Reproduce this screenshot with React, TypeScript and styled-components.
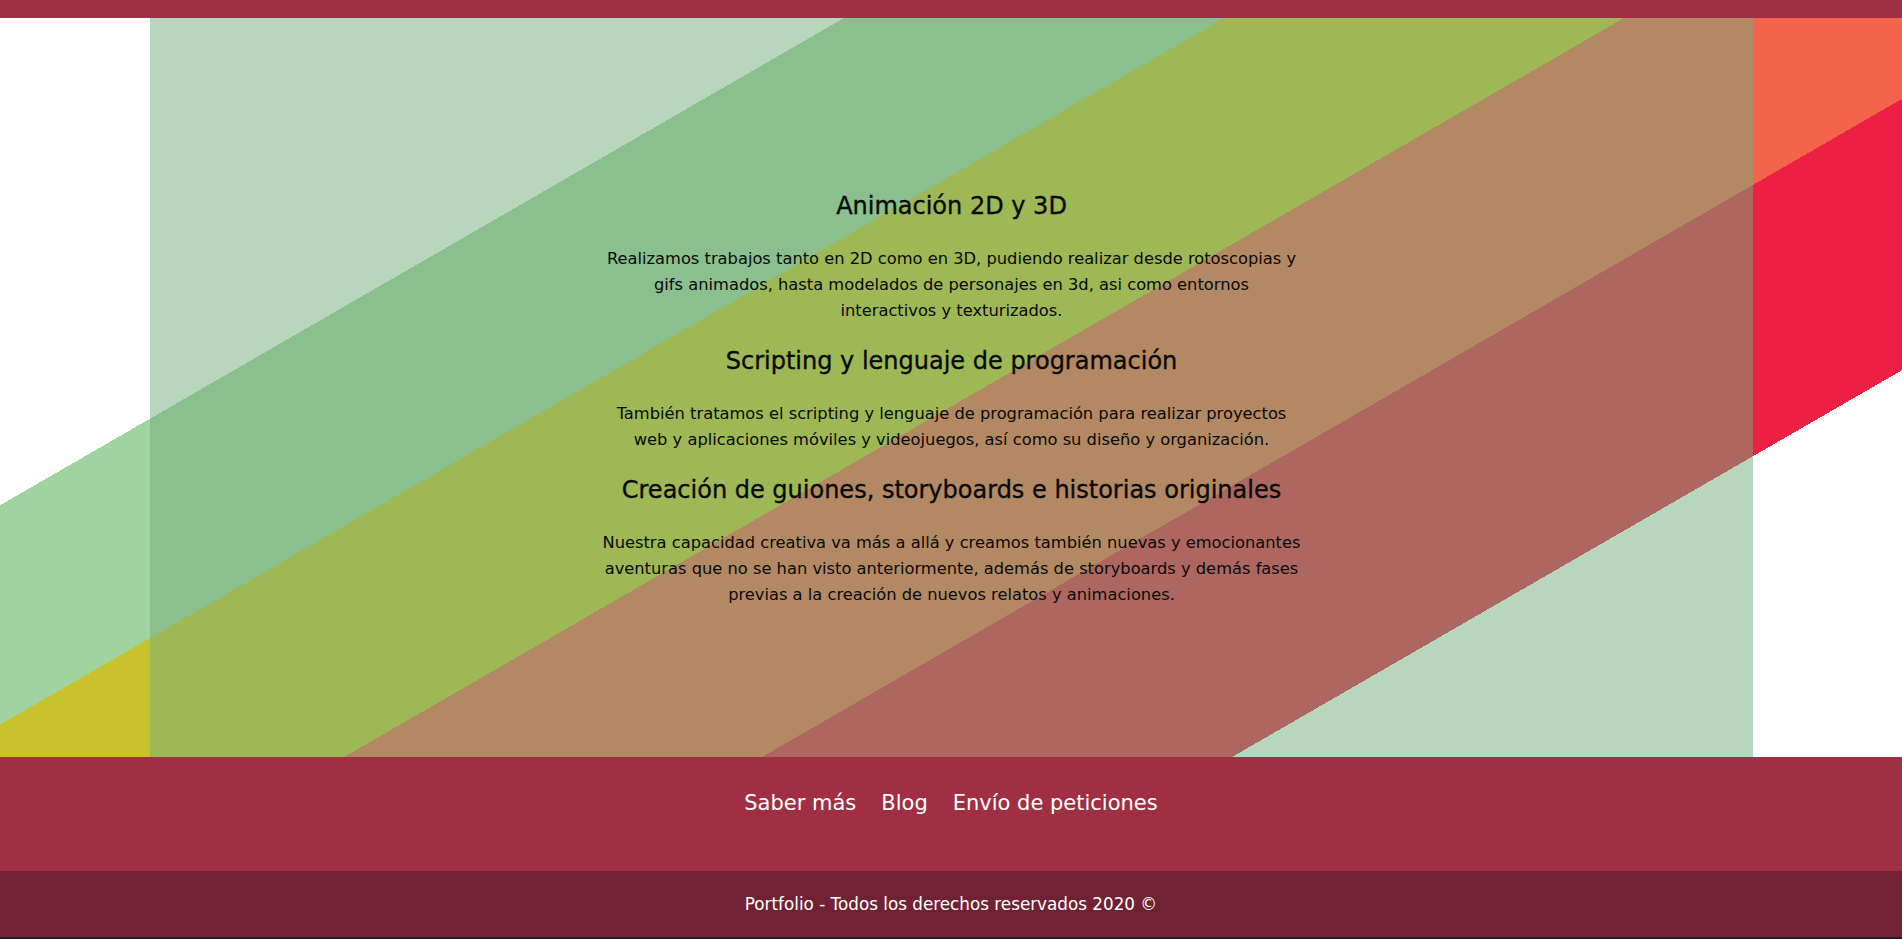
import React from "react";
import styled, { createGlobalStyle } from "styled-components";

const GlobalStyle = createGlobalStyle`
  html, body {
    margin: 0;
    padding: 0;
    background: #ffffff;
  }
  body {
    font-family: "DejaVu Sans", "Liberation Sans", sans-serif;
    overflow: hidden;
  }
  * { box-sizing: border-box; }
`;

const Page = styled.div`
  display: flex;
  flex-direction: column;
  width: 1902px;
  min-height: 939px;
`;

const TopBar = styled.header`
  height: 18px;
  background: #a02f43;
`;

const Hero = styled.section`
  height: 739px;
  display: flex;
  padding: 0 149px 0 150px;
  background: linear-gradient(
    150deg,
    #ffffff 422px,
    #a1d39f 422px 612px,
    #c8c22d 612px 812px,
    #f4644a 812px 1021px,
    #eb2043 1021px 1256px,
    #ffffff 1256px
  );
`;

const Panel = styled.div`
  flex: 1;
  display: flex;
  flex-direction: column;
  align-items: center;
  padding-top: 174px;
  background: rgba(113, 173, 125, 0.5);
`;

const Services = styled.div`
  width: 760px;
  display: flex;
  flex-direction: column;
  align-items: center;
  text-align: center;
  color: #0a0a0a;
`;

const ServiceTitle = styled.h2`
  margin: 0 0 25px;
  font-size: 24px;
  font-weight: normal;
  line-height: 29px;
  white-space: nowrap;
  -webkit-text-stroke: 0.35px currentColor;
`;

const ServiceText = styled.p`
  margin: 0 0 23px;
  font-size: 16.3px;
  line-height: 26px;
  white-space: pre-line;
`;

const NavFooter = styled.nav`
  height: 114px;
  background: #a02f43;
  display: flex;
  justify-content: center;
  align-items: flex-start;
  padding-top: 32px;
  gap: 25px;
`;

const NavLink = styled.a`
  color: #ffffff;
  text-decoration: none;
  font-size: 21px;
  line-height: 28px;
`;

const CopyFooter = styled.footer`
  height: 66px;
  background: #712232;
  display: flex;
  justify-content: center;
  align-items: center;
  color: #ffffff;
  font-size: 16.8px;
`;

const BottomStrip = styled.div`
  height: 2px;
  background: #1e1e1e;
`;

const services = [
  {
    title: "Animación 2D y 3D",
    lines: [
      "Realizamos trabajos tanto en 2D como en 3D, pudiendo realizar desde rotoscopias y",
      "gifs animados, hasta modelados de personajes en 3d, asi como entornos",
      "interactivos y texturizados.",
    ],
  },
  {
    title: "Scripting y lenguaje de programación",
    lines: [
      "También tratamos el scripting y lenguaje de programación para realizar proyectos",
      "web y aplicaciones móviles y videojuegos, así como su diseño y organización.",
    ],
  },
  {
    title: "Creación de guiones, storyboards e historias originales",
    lines: [
      "Nuestra capacidad creativa va más a allá y creamos también nuevas y emocionantes",
      "aventuras que no se han visto anteriormente, además de storyboards y demás fases",
      "previas a la creación de nuevos relatos y animaciones.",
    ],
  },
];

export default function App() {
  return (
    <>
      <GlobalStyle />
      <Page>
        <TopBar />
        <Hero>
          <Panel>
            <Services>
              {services.map((s) => (
                <React.Fragment key={s.title}>
                  <ServiceTitle>{s.title}</ServiceTitle>
                  <ServiceText>{s.lines.join("\n")}</ServiceText>
                </React.Fragment>
              ))}
            </Services>
          </Panel>
        </Hero>
        <NavFooter>
          <NavLink href="#">Saber más</NavLink>
          <NavLink href="#">Blog</NavLink>
          <NavLink href="#">Envío de peticiones</NavLink>
        </NavFooter>
        <CopyFooter>Portfolio - Todos los derechos reservados 2020 ©</CopyFooter>
        <BottomStrip />
      </Page>
    </>
  );
}
